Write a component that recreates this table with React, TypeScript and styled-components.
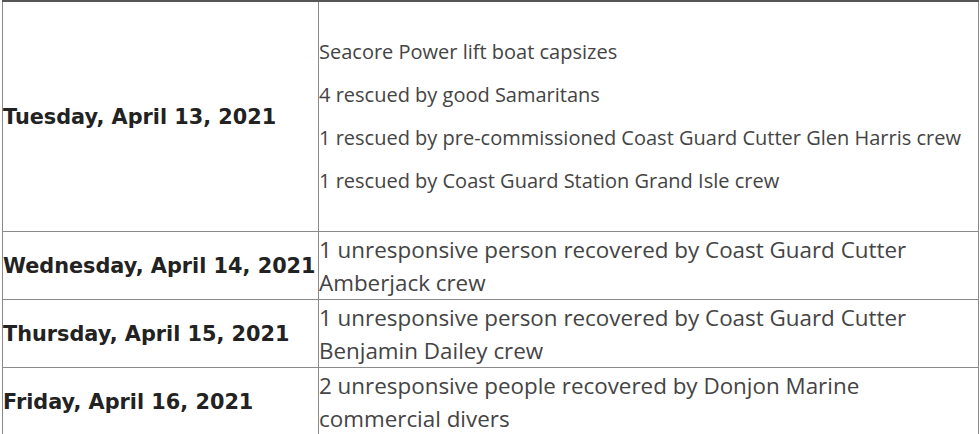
import React from "react";
import styled, { createGlobalStyle } from "styled-components";

const Global = createGlobalStyle`
  html, body { margin: 0; padding: 0; background: #fff; }
  body { overflow: hidden; }
`;

const Table = styled.table`
  border-collapse: collapse;
  width: 977px;
  margin-left: 2px;
  border-top: 2px solid #555;
  border-left: 1px solid #777;
  border-right: 1px solid #666;
`;

const Row = styled.tr``;

const DateCell = styled.td`
  width: 315px;
  padding: 0;
  border: 1px solid #8a8a8a;
  vertical-align: middle;
  font-family: "DejaVu Sans", Verdana, sans-serif;
  font-weight: bold;
  font-size: 20.8px;
  color: #222;
  white-space: nowrap;
`;

const EventCell = styled.td<{ $spaced?: boolean }>`
  padding: ${(p) => (p.$spaced ? "23px 0 24px" : "1px 0 0")};
  border: 1px solid #8a8a8a;
  vertical-align: middle;
  font-family: "Open Sans", "Noto Sans", sans-serif;
  font-size: ${(p) => (p.$spaced ? "20px" : "22.4px")};
  line-height: 33px;
  color: #444;
`;

const Para = styled.p`
  margin: 10px 0;
`;

const EventText = styled.div`
  max-width: 600px;
`;

const rows: { date: string; events: string[]; spaced?: boolean }[] = [
  {
    date: "Tuesday, April 13, 2021",
    events: [
      "Seacore Power lift boat capsizes",
      "4 rescued by good Samaritans",
      "1 rescued by pre-commissioned Coast Guard Cutter Glen Harris crew",
      "1 rescued by Coast Guard Station Grand Isle crew",
    ],
    spaced: true,
  },
  {
    date: "Wednesday, April 14, 2021",
    events: ["1 unresponsive person recovered by Coast Guard Cutter Amberjack crew"],
  },
  {
    date: "Thursday, April 15, 2021",
    events: ["1 unresponsive person recovered by Coast Guard Cutter Benjamin Dailey crew"],
  },
  {
    date: "Friday, April 16, 2021",
    events: ["2 unresponsive people recovered by Donjon Marine commercial divers"],
  },
];

export default function App() {
  return (
    <>
      <Global />
      <Table>
        <tbody>
          {rows.map((r) => (
            <Row key={r.date}>
              <DateCell>{r.date}</DateCell>
              <EventCell $spaced={r.spaced}>
                {r.spaced ? (
                  r.events.map((e) => <Para key={e}>{e}</Para>)
                ) : (
                  <EventText>{r.events[0]}</EventText>
                )}
              </EventCell>
            </Row>
          ))}
        </tbody>
      </Table>
    </>
  );
}
